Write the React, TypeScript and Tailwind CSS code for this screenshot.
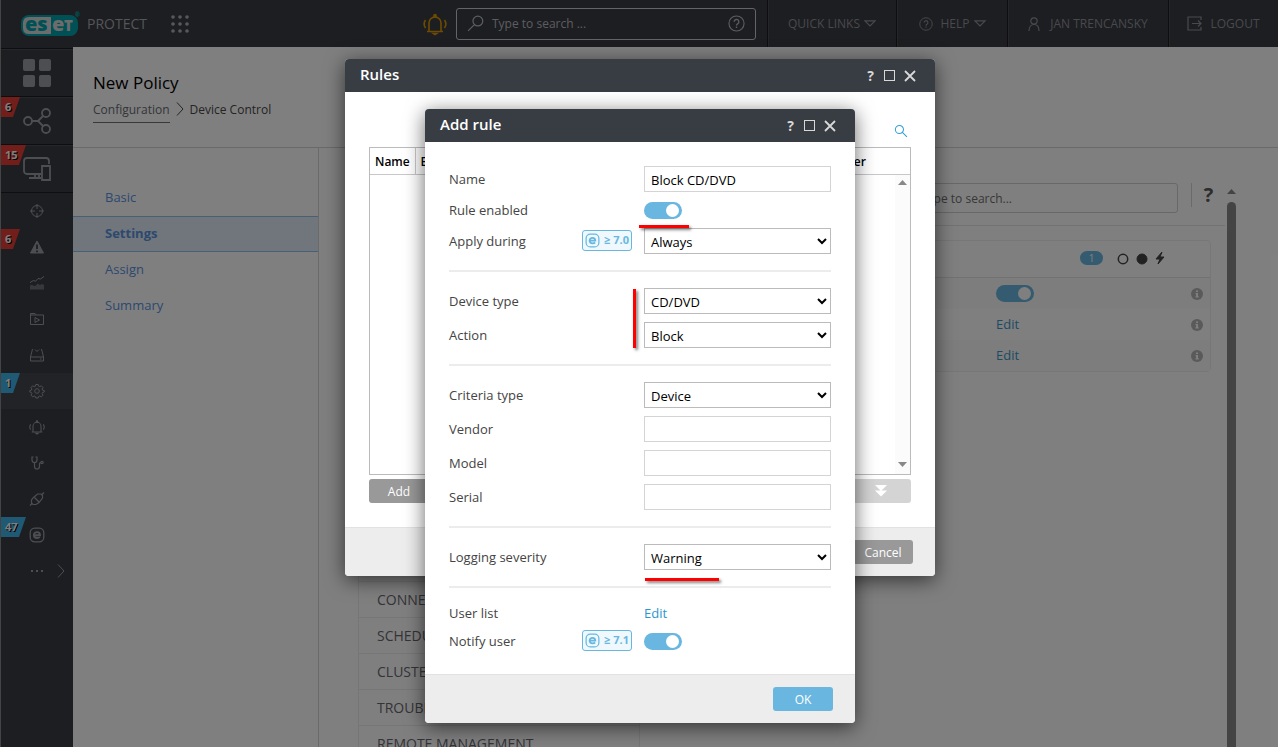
import React, { useState } from 'react';

function ELogo({ className }: { className: string }) {
  return (
    <svg viewBox="0 0 16 16" className={className} fill="none" stroke="currentColor">
      <rect x="1.2" y="1.2" width="13.6" height="13.6" rx="4.5" strokeWidth="1.3" />
      <path d="M5 8.2h6c0-2-1.2-3.1-3-3.1S4.9 6.3 4.9 8s1.3 3 3.2 3c1.200 0 2-.3 2.700-.9" strokeWidth="1.9" />
    </svg>
  );
}

function Bell({ className }: { className: string }) {
  return (
    <svg viewBox="0 0 24 24" className={className} fill="none" stroke="currentColor" strokeWidth="1.6">
      <path d="M4 19.500h16M6 19.500v-8.500a6 6 0 0 1 12 0v8.500" />
      <path d="M11 3.500a1 1 0 0 1 2 0v1.500h-2zM10.500 21.500h3l-1.500 1z" fill="currentColor" />
      <path d="M2.500 8C.8 10.500.8 13.500 2.500 16M21.500 8c1.700 2.500 1.700 5.500 0 8" />
    </svg>
  );
}

function Help({ className }: { className: string }) {
  return (
    <svg viewBox="0 0 18 18" className={className} fill="none" stroke="currentColor" strokeWidth="1.2">
      <circle cx="9" cy="9" r="8" />
      <path d="M6.500 7.200a2.500 2.500 0 1 1 3.700 2.200c-.9.500-1.200.9-1.200 1.800M9 12.300v1.500" strokeWidth="1.4" />
    </svg>
  );
}

function Caret() {
  return (
    <svg viewBox="0 0 12 7" className="h-[7px] w-3" fill="none" stroke="currentColor" strokeWidth="1.2">
      <path d="M1 .8h10L6 6z" />
    </svg>
  );
}

function Magnifier({ className, flip }: { className: string; flip?: boolean }) {
  return (
    <svg viewBox="0 0 18 18" className={className} fill="none" stroke="currentColor" strokeWidth="1.3">
      {flip ? (
        <path d="M11.500 1.200a5.200 5.200 0 1 1 0 10.400 5.200 5.200 0 0 1 0-10.400zM7.800 10.200L1.200 16.800" />
      ) : (
        <path d="M7 1.800a5.200 5.200 0 1 1 0 10.400A5.200 5.200 0 0 1 7 1.800zM10.800 10.800l5.800 5.700" />
      )}
    </svg>
  );
}

function Info() {
  return (
    <svg viewBox="0 0 12 12" className="h-3 w-3 text-[#b4b4b4]">
      <circle cx="6" cy="6" r="6" fill="currentColor" />
      <path d="M5 2.500h2v1.500H5zM4.500 5H7v3.200h.7v1.200H4.500V8.200h.6V6.100h-.6z" fill="#fff" />
    </svg>
  );
}

function Flag({ value, color }: { value: string; color: 'red' | 'blue' }) {
  return (
    <span
      className={`absolute left-0 top-0 flex h-5 items-center pl-1 text-[11px] font-bold text-white [text-shadow:1px_1px_0_#000] [clip-path:polygon(0_0,100%_0,calc(100%-7px)_100%,0_100%)] ${
        color === 'red' ? 'bg-[#e43e36]' : 'bg-[#3fb2e8]'
      } ${value.length > 1 ? 'w-[25px]' : 'w-[19px]'}`}
    >
      {value}
    </span>
  );
}

const BIG_ITEMS = [
  {
    name: 'Dashboard',
    flag: '',
    icon: (
      <svg viewBox="0 0 28 28" className="h-7 w-7" fill="currentColor">
        <rect width="12" height="12" rx="2" />
        <rect x="16" width="12" height="12" rx="2" />
        <rect y="16" width="12" height="12" rx="2" />
        <rect x="16" y="16" width="12" height="12" rx="2" />
      </svg>
    ),
  },
  {
    name: 'Computers',
    flag: '6',
    icon: (
      <svg viewBox="0 0 28 28" className="h-7 w-7" fill="none" stroke="currentColor" strokeWidth="1.8">
        <circle cx="5" cy="14" r="4" />
        <circle cx="23" cy="6" r="4" />
        <circle cx="23" cy="22" r="4" />
        <path d="M9 14h6l5-5M15 14l5 5" />
      </svg>
    ),
  },
  {
    name: 'Devices',
    flag: '15',
    icon: (
      <svg viewBox="0 0 28 28" className="h-7 w-7" fill="none" stroke="currentColor" strokeWidth="1.8">
        <path d="M18 19H4a3 3 0 0 1-3-3V6a3 3 0 0 1 3-3h19a3 3 0 0 1 3 3v3M12 19v4M16 19v4M6 23h12" />
        <path d="M19 11h8v14h-8z" />
      </svg>
    ),
  },
];

const s = { viewBox: '0 0 16 16', className: 'h-4 w-4', fill: 'none', stroke: 'currentColor', strokeWidth: 1 };

const SMALL_ITEMS = [
  { name: 'Detections', flag: '', icon: <svg {...s}><circle cx="8" cy="8" r="5.5" /><path d="M8 1v5M8 10v5M1 8h5M10 8h5" /></svg> },
  {
    name: 'Alerts',
    flag: '6',
    icon: (
      <svg {...s}>
        <path d="M8 2L14.500 14H1.500z" fill="currentColor" strokeLinejoin="round" />
        <path d="M8 5.500v4.500M8 11.500v1.800" stroke="#3a3c42" strokeWidth="1.8" />
      </svg>
    ),
  },
  {
    name: 'Reports',
    flag: '',
    icon: (
      <svg {...s}>
        <path d="M1 7.500l3.500-2 2 .8L9 3.500l2.500.5L15 1.500" />
        <path d="M1 14.500v-4l2-.8 2 1.300 2-.5 1.500-2L11 10l2-1 2 1v4.500z" fill="currentColor" stroke="none" opacity=".55" />
      </svg>
    ),
  },
  { name: 'Tasks', flag: '', icon: <svg {...s}><path d="M1.500 13.500V2.500h4.500l1.500 1.500h7v9.500zM1.500 4h6M6 6.500v5L10.500 9z" /></svg> },
  { name: 'Installers', flag: '', icon: <svg {...s}><path d="M3.500 2L1.500 10v4h13v-4l-2-8M1.500 10h13M11 12h1.500M6 2.500l2 2 2-2" /></svg> },
  {
    name: 'Policies',
    flag: '1',
    icon: (
      <svg {...s}>
        <circle cx="8" cy="8" r="2.3" />
        <path d="M6.800 1.500h2.400l.4 1.700 1.200.5 1.500-.9 1.700 1.700-.9 1.500.5 1.200 1.700.4v1.400l-1.700.5-.5 1.200.9 1.500-1.700 1.700-1.500-.9-1.200.5-.4 1.500H6.800l-.4-1.500-1.200-.5-1.500.9L2 12.200l.9-1.500-.5-1.200L.8 9V7.600l1.600-.4.5-1.200L2 4.500l1.700-1.700 1.500.9 1.200-.5z" />
      </svg>
    ),
  },
  { name: 'Notifications', flag: '', icon: <Bell className="h-4 w-4" /> },
  {
    name: 'Status overview',
    flag: '',
    icon: (
      <svg {...s} strokeWidth="1.2">
        <path d="M4.500 2H3v3a2.500 2.500 0 0 0 5 0V2H6.500M5.500 7.500v4a2.500 2.500 0 0 0 5 0V9q0-1.500 1.500-1.500" />
        <circle cx="13" cy="7.5" r="1.2" />
      </svg>
    ),
  },
  {
    name: 'Connections',
    flag: '',
    icon: (
      <svg {...s} strokeWidth="1.2">
        <path d="M4.500 6.500L8.500 3h3.500l1.500 1.500V7L10 11.500 7 13.500H4L2.500 12V9zM5 6l5.500 5.500M13 3.500L15 1.500M3 12.500L1 14.500" />
      </svg>
    ),
  },
  { name: 'Cloud', flag: '47', icon: <ELogo className="h-4 w-4" /> },
];

const NAV = ['Basic', 'Settings', 'Assign', 'Summary'];
const SECTIONS = ['CONNECTION', 'SCHEDULED TASKS', 'CLUSTER', 'TROUBLESHOOTING', 'REMOTE MANAGEMENT'];

function TopBar() {
  const cell = 'flex h-full shrink-0 items-center justify-center border-l border-[#1c1d20] text-[12px] text-[#90939a] shadow-[inset_1px_0_0_#4a4d54]';
  return (
    <header className="flex h-[47px] shrink-0 items-center border-l border-[#888] bg-[#3a3c42] pl-5">
      <svg viewBox="0 0 60 26" className="h-[26px] w-[60px]">
        <rect x="0" y="4" width="57" height="21" rx="8" fill="#00a3aa" />
        <path d="M8 6h22v17H8q-6 0-6-6v-5q0-6 6-6z" fill="#d8d8d8" />
        <g fontFamily="'Open Sans', sans-serif" fontWeight="800" fontSize="20">
          <text x="4" y="20" fill="#00a3aa">es</text>
          <text x="31" y="20" fill="#d8d8d8">e</text>
          <text x="43" y="20" fill="#d8d8d8" fontSize="15">T</text>
          <text x="54" y="6" fill="#00a3aa" fontSize="6">®</text>
        </g>
      </svg>
      <span className="ml-[6px] text-[14px] text-[#a8abb0]">PROTECT</span>
      <button aria-label="Apps" className="ml-6 text-[#b0b3b8]">
        <svg viewBox="0 0 18 18" className="h-[18px] w-[18px]" fill="currentColor">
          {[2, 9, 16].map((y) => [2, 9, 16].map((x) => <circle key={`${x}-${y}`} cx={x} cy={y} r="1.8" />))}
        </svg>
      </button>
      <Bell className="ml-auto h-6 w-6 shrink-0 text-[#dc9600]" />
      <div className="ml-[9px] flex h-8 w-[300px] shrink-0 items-center rounded-[3px] border border-[#c8c8c8] px-2.5 text-[#b8bbc0]">
        <Magnifier flip className="h-[17px] w-[17px] shrink-0" />
        <input aria-label="Search" placeholder="Type to search ..." className="ml-2 min-w-0 flex-1 bg-transparent text-[12px] outline-none placeholder:text-[#b8bbc0]" />
        <Help className="h-[17px] w-[17px] shrink-0" />
      </div>
      <nav className="ml-[11px] flex h-full">
        <button className={`${cell} w-[129px] gap-1`}>QUICK LINKS <Caret /></button>
        <button className={`${cell} w-[111px] gap-1`}><Help className="mr-1 h-[14px] w-[14px]" />HELP <Caret /></button>
        <button className={`${cell} w-[161px] gap-2.5`}>
          <svg viewBox="0 0 12 14" className="h-[14px] w-3" fill="none" stroke="currentColor" strokeWidth="1.2">
            <circle cx="6" cy="4" r="3.2" />
            <path d="M1 14c0-4 2-6.500 5-6.500S11 10 11 14" />
          </svg>
          JAN TRENCANSKY
        </button>
        <button className={`${cell} w-[110px] gap-2`}>
          <svg viewBox="0 0 15 15" className="h-[15px] w-[15px]" fill="none" stroke="currentColor" strokeWidth="1.2">
            <path d="M14 4V1H1v13h13v-3M5 7.500h9M11 4.500l3 3-3 3" />
          </svg>
          LOGOUT
        </button>
      </nav>
    </header>
  );
}

function SideBar() {
  return (
    <aside className="flex w-[73px] shrink-0 flex-col border-l border-[#888] bg-[#3a3c42] pt-px text-[#9a9da2]">
      {BIG_ITEMS.map((it) => (
        <a key={it.name} href="#" aria-label={it.name} className="relative flex h-12 shrink-0 items-center justify-center border-t border-[#1c1d20] shadow-[inset_0_1px_0_#4a4d54]">
          {it.flag && <Flag value={it.flag} color="red" />}
          {it.icon}
        </a>
      ))}
      <div className="border-t border-[#1c1d20]">
        {SMALL_ITEMS.map((it) => (
          <a key={it.name} href="#" aria-label={it.name} className={`relative flex h-9 items-center justify-center ${it.name === 'Policies' ? 'bg-[#45474d]' : ''}`}>
            {it.flag && <Flag value={it.flag} color={it.name === 'Alerts' ? 'red' : 'blue'} />}
            {it.icon}
          </a>
        ))}
        <div className="flex h-9 items-center justify-end gap-3.5 pr-2">
          <svg viewBox="0 0 12 3" className="h-[3px] w-3" fill="currentColor">
            <path d="M0 0h2v2H0zM5 0h2v2H5zM10 0h2v2h-2z" />
          </svg>
          <svg viewBox="0 0 8 14" className="h-[14px] w-2" fill="none" stroke="currentColor">
            <path d="M1 .5L7 7l-6 6.500" />
          </svg>
        </div>
      </div>
    </aside>
  );
}

function Toggle({ id, label }: { id: string; label?: string }) {
  const [on, setOn] = useState(true);
  return (
    <input
      id={id}
      type="checkbox"
      aria-label={label}
      checked={on}
      onChange={() => setOn(!on)}
      className="flex h-[17px] w-[38px] shrink-0 appearance-none items-center rounded-full bg-[#999] px-[3px] before:h-[13px] before:w-[13px] before:rounded-full before:bg-white checked:justify-end checked:bg-[#69b7e0]"
    />
  );
}

function SettingsPage() {
  return (
    <div className="flex min-w-0 flex-1 flex-col bg-white">
      <div className="h-[101px] shrink-0 border-b border-[#d4d4d4] px-5 pt-[23px]">
        <h1 className="text-[17px] leading-[26px] text-black">New Policy</h1>
        <div className="mt-1 flex items-start gap-1.5 text-[12px] leading-5 text-[#484848]">
          <a href="#" className="border-b border-[#707070] pb-[2px] text-[#686c72]">Configuration</a>
          <svg viewBox="0 0 8 14" className="mt-[2px] h-[14px] w-2" fill="none" stroke="currentColor">
            <path d="M1 .5L7 7l-6 6.500" />
          </svg>
          <span>Device Control</span>
        </div>
      </div>
      <div className="flex min-h-0 flex-1">
        <nav className="w-[246px] shrink-0 border-r border-[#d4d4d4] pt-8 text-[13px]">
          {NAV.map((n) => (
            <a key={n} href="#" className={`flex h-9 items-center pl-8 text-[#5a92e0] ${n === 'Settings' ? 'border-y border-[#8cc0ec] bg-[#e0ecf6] font-bold' : ''}`}>
              {n}
            </a>
          ))}
        </nav>
        <main className="flex min-w-0 flex-1 pl-[39px] pr-10">
          <div className="flex min-w-0 flex-1 flex-col pt-[35px]">
            <div className="flex h-[43px] shrink-0 items-start justify-end border-b border-[#e4e4e4]">
              <input aria-label="Search settings" placeholder="Type to search..." className="h-[30px] w-[278px] rounded-[3px] border border-[#d0d0d0] px-5 text-[12px] placeholder:text-[#707070]" />
              <div className="ml-[13px] flex h-6 w-[34px] items-center justify-center border-l border-[#d4d4d4]">
                <a href="#" className="text-[20px] font-bold text-[#5a5a5a]">?</a>
              </div>
            </div>
            <div className="flex min-h-0 flex-1">
              <div className="flex w-[282px] shrink-0 flex-col border-x border-[#ececec] pt-[355px]">
                {SECTIONS.map((t) => (
                  <a key={t} href="#" className="flex h-9 shrink-0 items-center whitespace-nowrap border-t border-[#ececec] pl-[18px] text-[14px] text-[#686870]">{t}</a>
                ))}
              </div>
              <div className="min-w-0 flex-1 pl-5 pr-[14px] pt-[14px]">
                <div className="rounded border border-[#eee]">
                  <div className="flex h-[37px] items-center justify-end border-b border-[#e4e4e4] pb-[2px] pr-[45px]">
                    <span className="flex h-[14px] w-[23px] items-center justify-center rounded-full bg-[#69b7e0] text-[10px] text-white">1</span>
                    <svg viewBox="0 0 48 14" className="ml-[14px] h-[14px] w-12" fill="#444" stroke="#444">
                      <circle cx="6" cy="8" r="4.7" fill="none" strokeWidth="1.5" />
                      <circle cx="25" cy="8" r="5" />
                      <path d="M45 1l-6 7h4l-2 5 6-7h-4z" />
                    </svg>
                  </div>
                  {[0, 1, 2].map((i) => (
                    <div key={i} className={`flex h-[31px] items-center justify-end pr-[7px] ${i === 1 ? '' : 'bg-[#fafafa]'}`}>
                      <div className="w-[195px] text-[13px]">
                        {i === 0 ? <Toggle id="rulesOn" label="Device Control" /> : <a href="#" className="text-[#3a96c8]">Edit</a>}
                      </div>
                      <Info />
                    </div>
                  ))}
                </div>
              </div>
            </div>
          </div>
          <div className="flex w-[13px] shrink-0 flex-col items-center pt-[41px]">
            <svg viewBox="0 0 9 5" className="h-[5px] w-[9px]" fill="#888"><path d="M4.500 0L9 5H0z" /></svg>
            <div className="mt-2 w-[9px] flex-1 rounded-t-full bg-[#888]" />
          </div>
        </main>
      </div>
    </div>
  );
}

interface DialogProps {
  title: string;
  className: string;
  footer: string;
  footerClass: string;
  children: React.ReactNode;
}

function Dialog({ title, className, footer, footerClass, children }: DialogProps) {
  return (
    <div role="dialog" aria-label={title} className={`absolute left-1/2 ml-px -translate-x-1/2 rounded-[4px] bg-white shadow-[0_4px_20px_rgba(0,0,0,0.6)] ${className}`}>
      <div className="flex h-[33px] items-center rounded-t-[4px] bg-[#383c43] pl-[15px] pr-[19px] text-white">
        <h2 className="flex-1 pb-[2px] text-[15px] font-semibold">{title}</h2>
        <button aria-label="Help" className="text-[14px] font-bold text-[#d8d8d8]">?</button>
        <button aria-label="Maximize" className="ml-2.5 h-[11px] w-[11px] border border-[#d8d8d8]" />
        <button aria-label="Close" className="ml-[9px] text-[#d8d8d8]">
          <svg viewBox="0 0 12 12" className="h-3 w-3" stroke="currentColor" strokeWidth="1.8"><path d="M1 1l10 10M11 1L1 11" /></svg>
        </button>
      </div>
      {children}
      <div className="flex h-[49px] items-center justify-end rounded-b-[4px] border-t border-[#e2e2e2] bg-[#ededed] pr-[22px]">
        <button className={`h-6 w-[60px] rounded-[3px] pt-[2px] text-[12px] font-medium text-white ${footerClass}`}>{footer}</button>
      </div>
    </div>
  );
}

function RulesDialog() {
  return (
    <Dialog title="Rules" className="top-[59px] w-[590px]" footer="Cancel" footerClass="bg-[#999]">
      <div className="px-6 pb-6 pt-8">
        <button aria-label="Search rules" className="ml-auto mr-[3px] block text-[#2e9fd8]">
          <Magnifier className="h-[14px] w-[14px]" />
        </button>
        <div className="mt-[9px] flex h-[328px] flex-col border border-[#bbb]">
          <table className="w-full table-fixed text-left text-[12px] text-black">
            <thead>
              <tr className="h-[26px] border-b border-[#c8c8c8]">
                <th className="w-[45px] border-r border-[#c8c8c8] pl-[5px] pt-[2px] font-semibold">Name</th>
                <th className="pl-[5px] pt-[2px] font-semibold">Enabled</th>
                <th className="w-[76px] pl-[5px] pt-[2px] font-semibold">User</th>
              </tr>
            </thead>
          </table>
          <div className="ml-auto flex w-[15px] flex-1 flex-col items-center justify-between bg-[#fbfbfb] pb-[7px] pt-[5px]">
            <svg viewBox="0 0 9 5" className="h-[5px] w-[9px]" fill="#888"><path d="M4.500 0L9 5H0z" /></svg>
            <svg viewBox="0 0 9 5" className="h-[5px] w-[9px]" fill="#888"><path d="M4.500 5L9 0H0z" /></svg>
          </div>
        </div>
        <div className="mt-1 flex justify-between">
          <button className="h-6 w-[60px] rounded-[3px] bg-[#999] pt-[2px] text-[12px] font-medium text-white">Add</button>
          <button aria-label="Move to bottom" className="flex h-6 w-[60px] items-center justify-center rounded-[3px] bg-[#d4d4d4]">
            <svg viewBox="0 0 12 12" className="h-3 w-3" fill="#fff"><path d="M0 0h12L6 6zM0 5.500h12l-6 6z" /></svg>
          </button>
        </div>
      </div>
    </Dialog>
  );
}

function Row({ id, label, version, children }: { id: string; label: string; version?: string; children: React.ReactNode }) {
  return (
    <div className="flex h-[26px] items-center">
      <label htmlFor={id} className="flex-1 pt-[2px]">{label}</label>
      {version && (
        <span className="mb-[2px] mr-3 flex h-[21px] w-[50px] items-center justify-center gap-1 rounded-[3px] border border-[#69b7e0] bg-[#eef8fd] text-[11px] font-bold text-[#69b7e0]">
          <ELogo className="h-[15px] w-[15px] shrink-0" />≥ {version}
        </span>
      )}
      <div className="w-[187px]">{children}</div>
    </div>
  );
}

function Choice({ id, options }: { id: string; options: string[] }) {
  return (
    <select id={id} className="block h-[26px] w-full border border-[#bbb] bg-white pl-[2px] pt-[2px] text-black">
      {options.map((o) => <option key={o}>{o}</option>)}
    </select>
  );
}

function TextBox({ id, value }: { id: string; value?: string }) {
  return <input id={id} type="text" defaultValue={value} className="block h-[26px] w-full border border-[#d4d4d4] px-[6px] pt-[2px] text-black" />;
}

function AddRuleDialog() {
  const line = 'flex flex-col gap-2 border-t-2 border-[#ececec] py-4';
  const mark = 'pointer-events-none absolute bg-[#f00] shadow-[2px_2px_3px_rgba(0,0,0,0.5)]';
  return (
    <Dialog title="Add rule" className="top-[109px] w-[430px]" footer="OK" footerClass="bg-[#69b7e0]">
      <form className="px-6 pb-1 pt-6 text-[13px] text-[#444]">
        <div className="flex flex-col gap-[5px] pb-4">
          <Row id="name" label="Name"><TextBox id="name" value="Block CD/DVD" /></Row>
          <Row id="enabled" label="Rule enabled"><Toggle id="enabled" /></Row>
          <Row id="apply" label="Apply during" version="7.0"><Choice id="apply" options={['Always']} /></Row>
        </div>
        <div className={line}>
          <Row id="type" label="Device type"><Choice id="type" options={['CD/DVD']} /></Row>
          <Row id="action" label="Action"><Choice id="action" options={['Block']} /></Row>
        </div>
        <div className={line}>
          <Row id="criteria" label="Criteria type"><Choice id="criteria" options={['Device']} /></Row>
          <Row id="vendor" label="Vendor"><TextBox id="vendor" /></Row>
          <Row id="model" label="Model"><TextBox id="model" /></Row>
          <Row id="serial" label="Serial"><TextBox id="serial" /></Row>
        </div>
        <div className={line}>
          <Row id="severity" label="Logging severity"><Choice id="severity" options={['Warning']} /></Row>
        </div>
        <div className="flex flex-col gap-[2px] border-t-2 border-[#ececec] pb-4 pt-3">
          <Row id="users" label="User list"><a id="users" href="#" className="block pt-[2px] text-[#2a96d0]">Edit</a></Row>
          <Row id="notify" label="Notify user" version="7.1"><Toggle id="notify" /></Row>
        </div>
      </form>
      {/* red highlighter marks */}
      <div className={`${mark} left-[214px] top-[116px] h-[3px] w-[50px]`} />
      <div className={`${mark} left-[208px] top-[180px] h-[59px] w-[3px]`} />
      <div className={`${mark} left-[220px] top-[469px] h-[3px] w-[74px]`} />
    </Dialog>
  );
}

export default function App() {
  return (
    <div className="relative flex h-screen flex-col overflow-hidden font-['Open_Sans','Noto_Sans',sans-serif]">
      <TopBar />
      <div className="flex min-h-0 flex-1">
        <SideBar />
        <SettingsPage />
      </div>
      <div className="absolute inset-0 bg-black/50">
        <RulesDialog />
        <AddRuleDialog />
      </div>
    </div>
  );
}
